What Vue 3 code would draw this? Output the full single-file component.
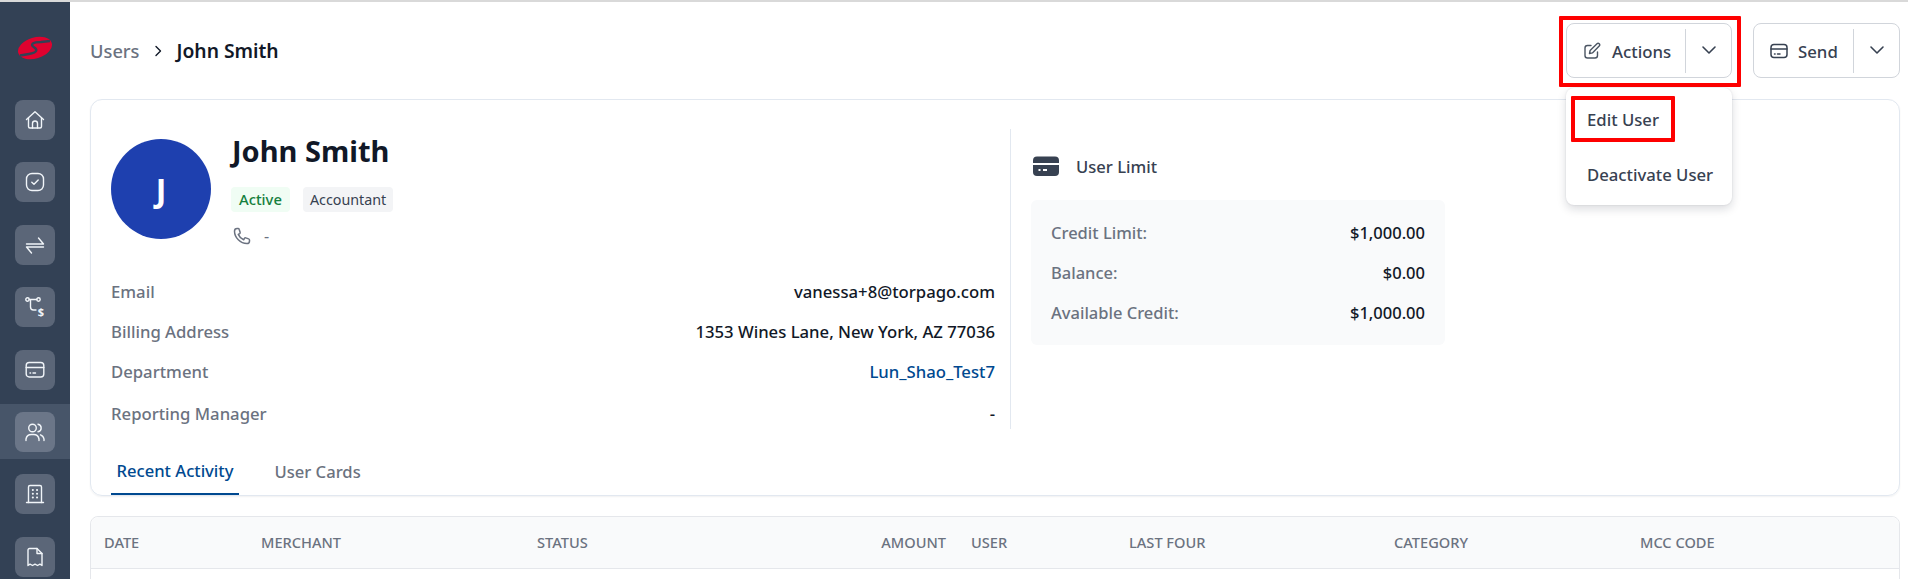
<script setup>
const navItems = [
  { id: 'home', active: false },
  { id: 'check', active: false },
  { id: 'swap', active: false },
  { id: 'flow', active: false },
  { id: 'card', active: false },
  { id: 'users', active: true },
  { id: 'building', active: false },
  { id: 'doc', active: false },
]
const details = [
  { label: 'Email', value: 'vanessa+8@torpago.com' },
  { label: 'Billing Address', value: '1353 Wines Lane, New York, AZ 77036' },
  { label: 'Department', value: 'Lun_Shao_Test7', link: true },
  { label: 'Reporting Manager', value: '-' },
]
const limits = [
  { label: 'Credit Limit:', value: '$1,000.00' },
  { label: 'Balance:', value: '$0.00' },
  { label: 'Available Credit:', value: '$1,000.00' },
]
const columns = ['Date', 'Merchant', 'Status', 'Amount', 'User', 'Last Four', 'Category', 'MCC Code']
</script>

<template>
  <div class="page">
    <aside class="sidebar">
      <svg class="logo" width="36" height="24" viewBox="0 0 36 24">
        <ellipse cx="18" cy="12" rx="17.500" ry="10.500" transform="rotate(-17 18 12)" fill="#e0022f" />
        <path d="M33 5 24 6C15 6 13 8.800 17 11.300 21 14 20 16.500 12 18L3 19.500" fill="none" stroke="#334155" stroke-width="2.400" />
      </svg>
      <nav class="nav">
        <div v-for="item in navItems" :key="item.id" class="nav-row" :class="{ active: item.active }">
          <div class="nav-btn">
            <svg width="20" height="20" viewBox="0 0 20 20" fill="none" stroke="#f1f5f9" stroke-width="1.400" stroke-linecap="round" stroke-linejoin="round">
              <template v-if="item.id === 'home'">
                <path d="M1.500 9.500 10 1.800l8.500 7.700" />
                <path d="M3.500 8v8.500a1.500 1.500 0 0 0 1.500 1.500h10a1.500 1.500 0 0 0 1.500-1.500V8" />
                <path d="M7.500 18v-4.500a2.500 2.500 0 0 1 5 0V18" />
              </template>
              <template v-else-if="item.id === 'check'">
                <rect x="1.500" y="1.500" width="17" height="17" rx="5.500" />
                <path d="m6.800 10.300 2.200 2 4.200-4.300" />
              </template>
              <template v-else-if="item.id === 'swap'">
                <path d="M1.500 9h17L13.500 3" />
                <path d="M18.500 12h-17l5 6" />
              </template>
              <template v-else-if="item.id === 'flow'">
                <circle cx="2.500" cy="2.500" r="1.700" />
                <circle cx="13.500" cy="2.500" r="1.700" />
                <path d="M4.200 2.500h7.600M5.500 2.500v7.500a3 3 0 0 0 3 3h2.500" />
                <text x="12.800" y="18.500" class="dollar">$</text>
              </template>
              <template v-else-if="item.id === 'card'">
                <rect x="1.200" y="2.500" width="17.600" height="14.500" rx="3" />
                <path d="M1.200 7.500h17.600" />
                <path d="M5 13h.6M8 13h2.500" />
              </template>
              <template v-else-if="item.id === 'users'">
                <circle cx="7.500" cy="6" r="3.800" />
                <path d="M1 18.500v-1.500a5.500 5.500 0 0 1 5.500-4.500h2a5.500 5.500 0 0 1 5.500 4.500v1.500" />
                <path d="M13 2.200a3.800 3.800 0 0 1 0 7.500M15.500 12.800a5.500 5.500 0 0 1 3.500 4.200v1.500" />
              </template>
              <template v-else-if="item.id === 'building'">
                <path d="M1.500 18.500h17" />
                <path d="M3.500 18.500V3a1.500 1.500 0 0 1 1.500-1.500h10A1.500 1.500 0 0 1 16.500 3v15.500" />
                <path d="M7.800 6h.1M12 6h.1M7.800 9.800h.1M12 9.800h.1M7.800 13.600h.1M12 13.600h.1" stroke-width="2" />
              </template>
              <template v-else>
                <path d="M3 18.500V3a1.500 1.500 0 0 1 1.500-1.500h7.500L17 6.500v12l-2-1.300-2.500 1.300-2.500-1.300-2.500 1.300L5 17.200Z" />
                <path d="M12 1.500v5h5" />
              </template>
            </svg>
          </div>
        </div>
      </nav>
    </aside>

    <main class="main">
      <header class="topbar">
        <div class="crumbs">
          <span class="crumb-parent">Users</span>
          <svg width="14" height="14" viewBox="0 0 14 14" fill="none" stroke="#111827" stroke-width="1.400" stroke-linecap="round" stroke-linejoin="round"><path d="m5 2.500 4.500 4.500L5 11.500" /></svg>
          <span class="crumb-current">John Smith</span>
        </div>
        <div class="actions">
          <div class="split-wrap">
            <div class="split actions-split">
              <button class="split-main">
                <svg width="18" height="18" viewBox="0 0 18 18" fill="none" stroke="#4b5563" stroke-width="1.400" stroke-linecap="round" stroke-linejoin="round">
                  <path d="M8 3.500H4.500a2.500 2.500 0 0 0-2.500 2.500v7.500A2.500 2.500 0 0 0 4.500 16H12a2.500 2.500 0 0 0 2.500-2.500V10" />
                  <path d="m6.500 11.500.6-3L14 1.800a1.500 1.500 0 0 1 2.200 2.200l-6.800 6.900Z" />
                </svg>
                <span>Actions</span>
              </button>
              <span class="split-sep"></span>
              <button class="split-caret">
                <svg width="16" height="16" viewBox="0 0 16 16" fill="none" stroke="#374151" stroke-width="1.600" stroke-linecap="round" stroke-linejoin="round"><path d="m2 5 6 6 6-6" /></svg>
              </button>
            </div>
            <div class="mark mark-actions"></div>
            <div class="menu">
              <div class="menu-item">Edit User</div>
              <div class="menu-item">Deactivate User</div>
              <div class="mark mark-edit"></div>
            </div>
          </div>
          <div class="split send-split">
            <button class="split-main send-main">
              <svg width="18" height="16" viewBox="0 0 18 16" fill="none" stroke="#374151" stroke-width="1.500" stroke-linecap="round" stroke-linejoin="round">
                <rect x="1" y="1.500" width="16" height="13" rx="3" />
                <path d="M1 6h16" />
                <path d="M4.500 11h.6M7.500 11h2.500" />
              </svg>
              <span>Send</span>
            </button>
            <span class="split-sep"></span>
            <button class="split-caret">
              <svg width="16" height="16" viewBox="0 0 16 16" fill="none" stroke="#374151" stroke-width="1.600" stroke-linecap="round" stroke-linejoin="round"><path d="m2 5 6 6 6-6" /></svg>
            </button>
          </div>
        </div>
      </header>

      <section class="card">
        <div class="card-body">
          <div class="profile">
            <div class="identity">
              <div class="avatar">J</div>
              <div class="identity-text">
                <h1 class="name">John Smith</h1>
                <div class="badges">
                  <span class="badge badge-green">Active</span>
                  <span class="badge badge-gray">Accountant</span>
                </div>
                <div class="phone">
                  <svg width="18" height="18" viewBox="0 0 24 24" fill="none" stroke="#6b7280" stroke-width="2" stroke-linecap="round" stroke-linejoin="round">
                    <path d="M2 5.500C2 3.500 3.500 2 5.500 2h1.200c.7 0 1.300.4 1.500 1.100l1.300 3.900c.2.600 0 1.300-.6 1.700L7 9.800c1.300 3 4.200 5.900 7.200 7.200l1.100-1.900c.4-.6 1.100-.8 1.700-.6l3.900 1.300c.7.200 1.100.8 1.100 1.500v1.200c0 2-1.500 3.500-3.500 3.500C10 22 2 14 2 5.500Z" />
                  </svg>
                  <span>-</span>
                </div>
              </div>
            </div>
            <dl class="details">
              <div v-for="row in details" :key="row.label" class="detail-row">
                <dt>{{ row.label }}</dt>
                <dd :class="{ link: row.link }">{{ row.value }}</dd>
              </div>
            </dl>
          </div>
          <div class="limit">
            <div class="limit-head">
              <svg width="26" height="20" viewBox="0 0 26 20">
                <path d="M0 7V4.500A4 4 0 0 1 4 .5h18a4 4 0 0 1 4 4V7Z" fill="#374151" />
                <path d="M0 9h26v7a4 4 0 0 1-4 4H4a4 4 0 0 1-4-4Z" fill="#374151" />
                <path d="M5.500 14h2M10 14h4" stroke="#fff" stroke-width="2" />
              </svg>
              <span>User Limit</span>
            </div>
            <div class="limit-panel">
              <div v-for="row in limits" :key="row.label" class="limit-row">
                <span class="limit-label">{{ row.label }}</span>
                <span class="limit-value">{{ row.value }}</span>
              </div>
            </div>
          </div>
        </div>
        <div class="tabs">
          <div class="tab tab-active">Recent Activity</div>
          <div class="tab">User Cards</div>
        </div>
      </section>

      <section class="table">
        <div class="thead">
          <div v-for="col in columns" :key="col" class="th" :class="{ right: col === 'Amount' }">{{ col }}</div>
        </div>
      </section>
    </main>
  </div>
</template>

<style>
html, body { margin: 0; background: #fff; overflow: hidden; }
</style>

<style scoped>
.page {
  display: flex;
  width: 1908px;
  height: 579px;
  overflow: hidden;
  box-sizing: border-box;
  border-top: 2px solid #d9d9d9;
  font-family: "Noto Sans", sans-serif;
  color: #111827;
}
.sidebar {
  width: 70px;
  flex: none;
  background: #334155;
  display: flex;
  flex-direction: column;
  align-items: center;
}
.logo { margin-top: 34px; flex: none; }
.nav { margin-top: 32.5px; display: flex; flex-direction: column; width: 100%; gap: 7.4px; flex: none; }
.nav-row { height: 55px; display: flex; align-items: center; justify-content: center; }
.nav-row.active { background: #475569; }
.nav-btn {
  width: 40px; height: 40px; border-radius: 8px;
  background: #5b6678;
  display: flex; align-items: center; justify-content: center;
}
.active .nav-btn { background: #6b7688; }
.dollar { font: 700 11px "Noto Sans", sans-serif; fill: #f1f5f9; stroke: none; }

.main { flex: 1; min-width: 0; padding: 0 8px 0 20px; }
.topbar { height: 97px; display: flex; justify-content: space-between; box-sizing: border-box; padding-top: 21px; }
.crumbs { display: flex; align-items: center; gap: 11.500px; height: 55px; }
.crumb-parent { color: #6b7280; font-weight: 500; font-size: 18.300px; }
.crumb-current { color: #111827; font-weight: 600; font-size: 19.300px; }
.actions { display: flex; gap: 21px; }
.split-wrap { position: relative; }
.split {
  height: 55px; box-sizing: border-box;
  border: 1px solid #d1d5db; border-radius: 8px;
  display: flex; align-items: center; background: #fff;
}
.actions-split { width: 166px; }
.send-split { width: 147px; }
.split-main {
  flex: 1; height: 100%; border: 0; background: none; padding: 1px 0 0 16px;
  display: flex; align-items: center; gap: 11px;
  font: 500 16.800px "Noto Sans", sans-serif; color: #374151;
}
.send-main { gap: 10px; }
.split-sep { width: 1px; height: 44px; background: #d1d5db; }
.split-caret { width: 45px; height: 100%; border: 0; background: none; padding: 0 0 2px; display: flex; align-items: center; justify-content: center; }
.mark { position: absolute; border: 4px solid #fe0000; box-sizing: border-box; border-radius: 1px; }
.mark-actions { left: -7px; top: -7px; width: 182px; height: 71px; }
.menu {
  position: absolute; left: 0; top: 65px; width: 166px; height: 117px;
  background: #fff; border-radius: 8px; z-index: 2;
  box-shadow: 0 4px 10px rgba(15, 23, 42, .15), 0 0 2px rgba(15, 23, 42, .12);
  box-sizing: border-box; padding: 4px 0 0;
}
.menu-item { height: 55px; padding: 0 21px; box-sizing: border-box; font-size: 16.700px; font-weight: 500; color: #374151; white-space: nowrap; display: flex; align-items: center; }
.mark-edit { left: 5px; top: 8px; width: 104px; height: 46px; }

.card {
  box-sizing: border-box; height: 397px; border: 1px solid #e2e8f0; border-radius: 12px;
  box-shadow: 0 1px 2px rgba(15, 23, 42, .06);
  display: flex; flex-direction: column;
}
.card-body { display: flex; padding: 29px 20px 0; height: 329px; box-sizing: border-box; flex: none; }
.profile { width: 900px; flex: none; padding-right: 15px; box-sizing: border-box; border-right: 1px solid #e2e8f0; }
.identity { display: flex; gap: 20px; padding-top: 10px; height: 100px; }
.avatar {
  width: 100px; height: 100px; border-radius: 50%; background: #1e40af; color: #fff;
  display: flex; align-items: center; justify-content: center; font-size: 32px; font-weight: 700; flex: none;
}
.name { margin: -8px 0 0; padding-left: 1px; font-size: 29px; line-height: 40px; font-weight: 700; color: #111827; }
.badges { display: flex; gap: 13px; margin-top: 16px; }
.badge { height: 25px; padding: 0 7px; border-radius: 4px; font-size: 14.300px; line-height: 25px; box-sizing: border-box; }
.badge-green { background: #f0fdf4; color: #15803d; font-weight: 500; padding: 0 8px; font-size: 14.800px; }
.badge-gray { background: #f3f4f6; color: #374151; }
.phone { display: flex; align-items: center; gap: 13px; margin-top: 13px; padding-left: 2px; color: #6b7280; font-size: 16px; }
.details { margin: 32px 0 0; }
.detail-row { display: flex; justify-content: space-between; align-items: center; height: 40px; font-size: 16.700px; }
.detail-row:last-child { margin-top: 2px; }
dt { color: #6b7280; font-weight: 500; }
dd { margin: 0; color: #111827; font-weight: 500; }
dd.link { color: #004990; }
.limit { padding-left: 20px; width: 414px; box-sizing: content-box; }
.limit-head { display: flex; align-items: center; gap: 17px; margin: 27px 0 0 2px; height: 20px; font-size: 16.600px; font-weight: 500; color: #374151; }
.limit-panel { margin-top: 24px; background: #f9fafb; border-radius: 6px; padding: 12.500px 20px 12.500px; }
.limit-row { display: flex; justify-content: space-between; align-items: center; height: 40px; font-size: 16.500px; }
.limit-label { color: #6b7280; font-weight: 500; }
.limit-value { color: #111827; font-weight: 500; }
.tabs { display: flex; padding: 0 20px; gap: 30px; margin-top: auto; }
.tab { height: 47px; padding: 0 5.500px; display: flex; align-items: center; font-size: 16.600px; font-weight: 500; color: #6b7280; box-sizing: border-box; }
.tab-active { color: #004990; border-bottom: 2px solid #004990; }

.table { margin-top: 20px; border: 1px solid #e5e7eb; border-radius: 8px; height: 80px; box-sizing: border-box; }
.thead {
  display: grid;
  grid-template-columns: 157px 276px 300px 134px 158px 265px 246px 1fr;
  height: 51px; align-items: center;
  background: #f9fafb; border-bottom: 1px solid #e5e7eb; border-radius: 8px 8px 0 0;
}
.th { padding: 0 0 2px 13px; font-size: 14.600px; font-weight: 500; color: #6b7280; text-transform: uppercase; white-space: nowrap; }
.th.right { padding: 0 12px 2px 0; text-align: right; }
</style>
